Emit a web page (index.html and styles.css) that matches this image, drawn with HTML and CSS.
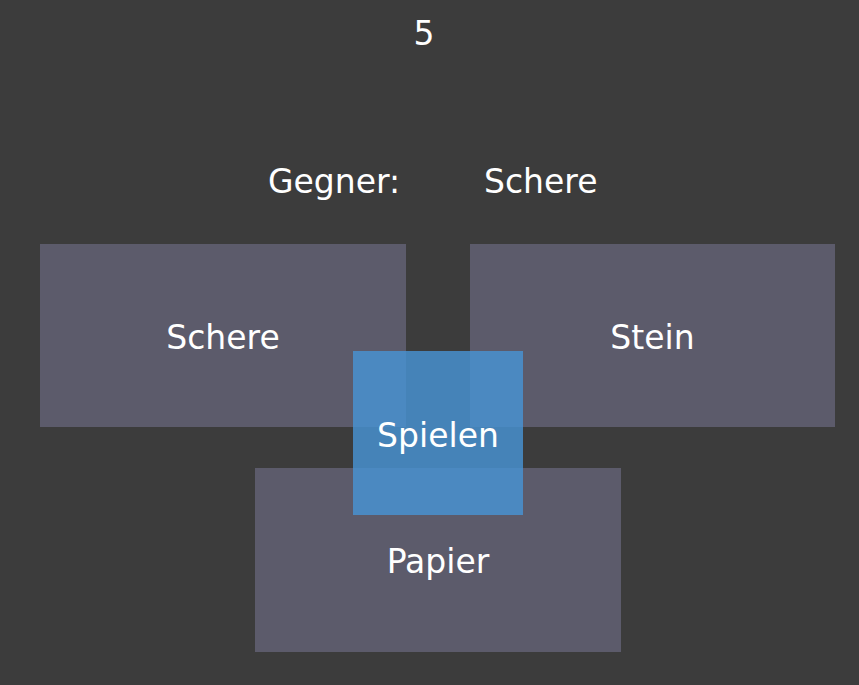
FILE: index.html
```html
<!DOCTYPE html>
<html>
<head>
    <title>Schere Stein Papier</title>
    <link rel="stylesheet" href="styles.css">
</head>
<body>
    <div class="game">
        <div class="counter">5</div>

        <div class="opponent">
            <span class="opponent-label">Gegner:</span>
            <span class="opponent-choice">Schere</span>
        </div>

        <div class="choices">
            <div class="choice-row">
                <div class="choice">Schere</div>
                <div class="choice">Stein</div>
            </div>
            <div class="choice-row bottom">
                <div class="choice">Papier</div>
            </div>
            <button class="play-btn">Spielen</button>
        </div>
    </div>
</body>
</html>
```

FILE: styles.css
```css
body { margin: 0; background-color: #3c3c3c; font-family: "DejaVu Sans", Verdana, sans-serif; color: #ffffff; }
.game { width: 859px; height: 685px; overflow: hidden; }
.counter { width: 848px; text-align: center; font-size: 33px; line-height: 38px; padding-top: 15px; }
.opponent { display: flex; padding-left: 268px; margin-top: 110px; font-size: 33px; line-height: 38px; }
.opponent-label { width: 216px; }
.choices { position: relative; margin-top: 43px; }
.choice-row { display: flex; gap: 64px; padding-left: 40px; }
.choice-row.bottom { padding-left: 255px; margin-top: 41px; }
.choice { box-sizing: border-box; width: 366px; height: 183px; padding-top: 4px; background-color: #5c5b6b; display: flex; align-items: center; justify-content: center; font-size: 33px; line-height: 38px; }
.choice + .choice { width: 365px; }
.choice-row.bottom .choice { height: 184px; }
.play-btn { position: absolute; left: 353px; top: 107px; width: 170px; height: 164px; border: none; padding: 6px 0 0; margin: 0; background-color: rgba(71, 149, 215, 0.8); color: #ffffff; font-family: inherit; font-size: 33px; line-height: 38px; cursor: pointer; }
```
